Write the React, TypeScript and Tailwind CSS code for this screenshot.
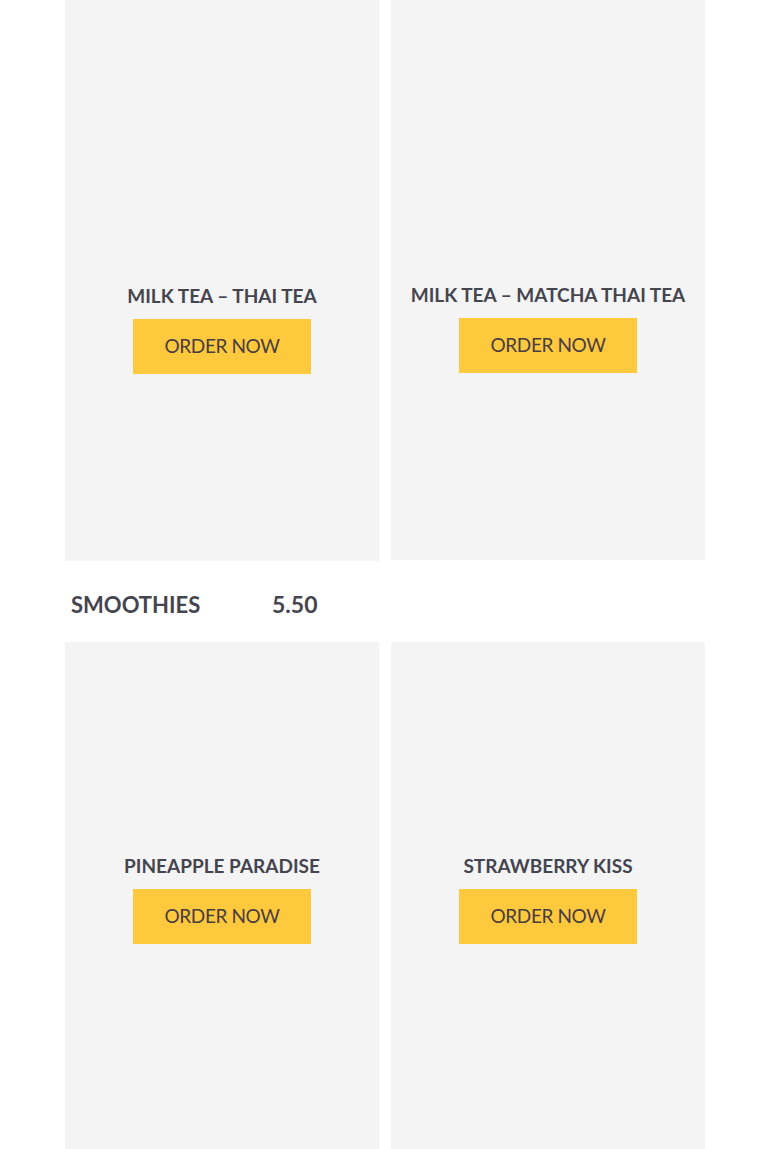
import React from 'react';

type Drink = { name: string };

const DrinkCard: React.FC<{ drink: Drink; className: string; padTop: string }> = ({ drink, className, padTop }) => {
  return (
    <div className={`bg-[#f4f4f4] flex flex-col items-center ${className} ${padTop}`}>
      <h3 className="text-[19px] leading-[26px] font-bold uppercase text-[#45454f] whitespace-nowrap">
        {drink.name}
      </h3>
      <button className="mt-[10px] w-[178px] h-[55px] bg-[#fec93c] text-[#4a3d42] text-[19px] uppercase tracking-[-0.4px]">
        Order Now
      </button>
    </div>
  );
};

const App: React.FC = () => {
  const milkTeas: Drink[] = [{ name: 'Milk Tea – Thai Tea' }, { name: 'Milk Tea – Matcha Thai Tea' }];
  const smoothies: Drink[] = [{ name: 'Pineapple Paradise' }, { name: 'Strawberry Kiss' }];

  return (
    <div className="w-[770px] h-[1149px] overflow-hidden bg-white" style={{ fontFamily: 'Lato, "Open Sans", sans-serif' }}>
      <div className="w-[640px] mx-auto">
        {/* Milk tea row (scrolled, top cut off) */}
        <div className="grid grid-cols-2 gap-x-[12px] items-start">
          <DrinkCard drink={milkTeas[0]} className="h-[561px]" padTop="pt-[283px]" />
          <DrinkCard drink={milkTeas[1]} className="h-[560px]" padTop="pt-[282px]" />
        </div>

        {/* Category heading */}
        <div className="flex items-center h-[81px] pl-[6px] pt-[6px] text-[22px] font-bold text-[#45454f]">
          <span className="w-[201px] uppercase">Smoothies</span>
          <span className="text-[23px]">5.50</span>
        </div>

        {/* Smoothies row */}
        <div className="grid grid-cols-2 gap-x-[12px]">
          {smoothies.map((d) => (
            <DrinkCard key={d.name} drink={d} className="h-[540px]" padTop="pt-[211px]" />
          ))}
        </div>
      </div>
    </div>
  );
};

export default App;
